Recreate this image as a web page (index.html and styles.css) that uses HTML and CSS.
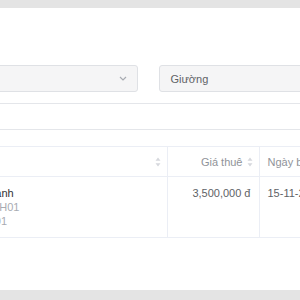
FILE: index.html
```html
<!DOCTYPE html>
<html lang="vi">
<head>
    <meta charset="UTF-8">
    <meta name="viewport" content="width=device-width, initial-scale=1.0">
    <title>Danh sách thuê giường</title>
    <link rel="stylesheet" href="styles.css">
</head>
<body>
    <div class="band"></div>

    <div class="content">
        <div class="filters">
            <div class="select">
                <span class="select-value">Tất cả phòng</span>
                <svg class="chevron" width="8" height="5" viewBox="0 0 8 5">
                    <polyline points="1,1 4,4 7,1" fill="none" stroke="#a8abb2" stroke-width="1.2"/>
                </svg>
            </div>
            <div class="select">
                <span class="select-value">Giường</span>
            </div>
        </div>

        <div class="search"></div>

        <table class="grid">
            <colgroup>
                <col class="w-name">
                <col class="w-price">
                <col>
            </colgroup>
            <thead>
                <tr>
                    <th class="col-name">
                        <span class="th-inner"><span class="th-label">Khách thuê</span> <span class="sort"><svg width="6" height="10" viewBox="0 0 6 10"><path d="M3 0.5 L5.5 3.8 L0.5 3.8 Z M3 9.5 L5.5 6.2 L0.5 6.2 Z" fill="#d6d8dd"/></svg></span></span>
                    </th>
                    <th class="col-price">
                        <span class="th-inner">Giá thuê <span class="sort"><svg width="6" height="10" viewBox="0 0 6 10"><path d="M3 0.5 L5.5 3.8 L0.5 3.8 Z M3 9.5 L5.5 6.2 L0.5 6.2 Z" fill="#d6d8dd"/></svg></span></span>
                    </th>
                    <th class="col-date">Ngày bắt đầu</th>
                </tr>
            </thead>
            <tbody>
                <tr>
                    <td class="col-name">
                        <div class="name">Lý Thị Oanh</div>
                        <div class="sub">Phòng: PH01</div>
                        <div class="sub">Giường 01</div>
                    </td>
                    <td class="col-price">3,500,000 đ</td>
                    <td class="col-date">15-11-2024</td>
                </tr>
            </tbody>
        </table>
    </div>

    <div class="band"></div>
</body>
</html>
```

FILE: styles.css
```css
body {
    margin: 0;
    background-color: #ffffff;
    font-family: "Liberation Sans", Arial, sans-serif;
    font-size: 11px;
    color: #606266;
    overflow: hidden;
    height: 300px;
}
.band {
    height: 8px;
    background-color: #e4e4e4;
}
.band:last-child {
    height: 10px;
}
.content {
    height: 282px;
    box-sizing: border-box;
    padding-top: 57px;
    margin-left: -120px;
    width: 536px;
}
.filters {
    display: grid;
    grid-template-columns: 1fr 1fr;
    column-gap: 21px;
}
.select {
    height: 27px;
    box-sizing: border-box;
    border: 1px solid #dfe1e5;
    border-radius: 3px;
    background-color: #f5f5f6;
    display: flex;
    align-items: center;
    padding: 0 10px 0 11px;
}
.select-value {
    flex-grow: 1;
    color: #5f6266;
}
.filters .select:first-child .select-value {
    visibility: hidden;
}
.search {
    margin-top: 11px;
    height: 27px;
    box-sizing: border-box;
    border: 1px solid #e4e6ea;
}
.grid {
    margin-top: 16px;
    width: 100%;
    border-collapse: collapse;
    table-layout: fixed;
}
.w-name {
    width: 287px;
}
.w-price {
    width: 92px;
}
.grid th,
.grid td {
    border-top: 1px solid #ebeef5;
    border-bottom: 1px solid #ebeef5;
    border-right: 1px solid #ebeef5;
    padding: 0 8px;
}
.grid th {
    height: 29px;
    font-weight: normal;
    color: #909399;
    text-align: left;
}
.grid td {
    height: 61px;
    vertical-align: top;
    padding-top: 9px;
    padding-bottom: 0;
    line-height: 14px;
    box-sizing: border-box;
}
.grid th.col-name,
.grid th.col-price {
    text-align: right;
    padding-right: 6px;
}
.th-label {
    visibility: hidden;
}
.th-inner {
    display: inline-flex;
    align-items: center;
    gap: 4px;
}
.sort {
    display: inline-flex;
}
.grid td.col-name {
    padding-left: 74px;
}
.grid td.col-price {
    text-align: right;
}
.name {
    color: #303133;
}
.sub {
    color: #a8abb2;
}
```
